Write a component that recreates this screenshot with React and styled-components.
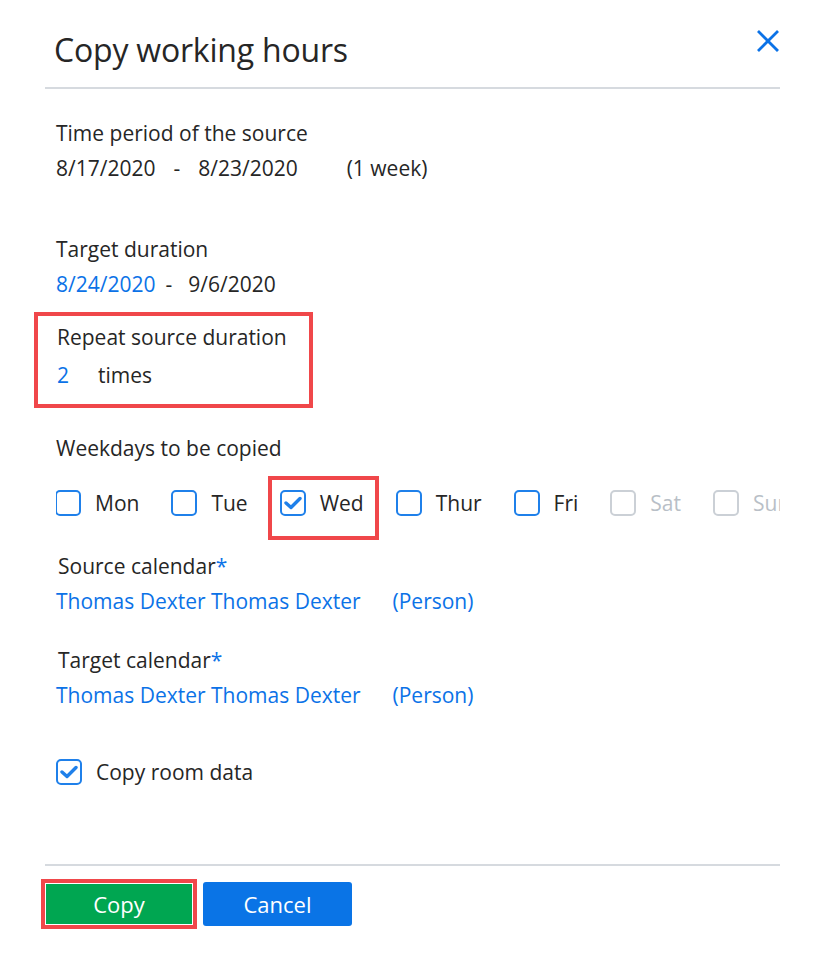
import styled, { createGlobalStyle } from "styled-components";

const GlobalStyle = createGlobalStyle`
    body {
        margin: 0;
        background: #ffffff;
        font-family: "Open Sans", "Noto Sans", sans-serif;
        color: #262626;
    }
`;

const Dialog = styled.div`
    width: 825px;
    height: 971px;
    box-sizing: border-box;
    padding: 0 45px;
    background: #ffffff;
    overflow: hidden;
`;

const Header = styled.div`
    height: 87px;
    display: flex;
    justify-content: space-between;
    align-items: flex-start;
    border-bottom: 2px solid #d6dadf;
`;

const Title = styled.h2`
    margin: 30px 0 0 9px;
    font-size: 32px;
    font-weight: 400;
    line-height: 40px;
    letter-spacing: -0.2px;
`;

const CloseButton = styled.button`
    margin: 29px 0 0 0;
    padding: 0;
    width: 24px;
    height: 24px;
    border: none;
    background: transparent;
    cursor: pointer;
`;

const Body = styled.div`
    display: flow-root;
    padding-left: 11px;
    height: 775px;
    border-bottom: 2px solid #d6dadf;
`;

const Section = styled.div`
    margin-top: ${(p) => p.$top || 0}px;
`;

const Label = styled.div`
    font-size: 21px;
    line-height: 35px;
    padding-left: ${(p) => p.$indent || 0}px;
`;

const Required = styled.span`
    color: #0b72e7;
`;

const ValueRow = styled.div`
    display: flex;
    align-items: center;
    font-size: 21px;
    line-height: 35px;
    margin-top: ${(p) => p.$top || 0}px;
`;

const Text = styled.span`
    margin-left: ${(p) => p.$gap || 0}px;
    color: ${(p) => (p.$link ? "#0b72e7" : "#262626")};
`;

const Highlight = styled.div`
    width: 279px;
    box-sizing: border-box;
    margin: 10px 0 0 -22px;
    padding: 4px 0 11px 19px;
    border: 4px solid #f0474a;
`;

/* the weekday row runs past the dialog edge and is cut off there */
const Clip = styled.div`
    width: 724px;
    overflow: hidden;
    padding: 14px 0 30px;
    margin-top: -14px;
`;

const WeekdayRow = styled.div`
    display: flex;
    align-items: center;
    gap: 32px;
    height: 37px;
    margin: 18px 0 0 -1px;
`;

const Option = styled.label`
    position: relative;
    display: flex;
    align-items: center;
    gap: 14px;
    flex-shrink: 0;
    font-size: 21px;
    color: ${(p) => (p.$disabled ? "#b9bfc7" : "#262626")};

    ${(p) =>
        p.$marked &&
        `
        &::after {
            content: "";
            position: absolute;
            left: -12px;
            right: -15px;
            top: -13px;
            bottom: -23px;
            border: 4px solid #f0474a;
            pointer-events: none;
        }
    `}
`;

const Box = styled.span`
    width: 26px;
    height: 26px;
    box-sizing: border-box;
    border: 2px solid ${(p) => (p.$disabled ? "#cbd0d6" : "#1f80ea")};
    border-radius: 5px;
    display: flex;
    align-items: center;
    justify-content: center;
    background: #ffffff;
`;

const Footer = styled.div`
    display: flex;
    align-items: center;
    gap: 6px;
    margin-top: 13px;
    margin-left: -4px;
`;

const Marked = styled.div`
    border: 4px solid #f0474a;
    padding: 1px;
`;

const Button = styled.button`
    width: ${(p) => p.$width}px;
    height: ${(p) => p.$height}px;
    border: none;
    border-radius: ${(p) => (p.$radius ? 3 : 0)}px;
    background: ${(p) => p.$bg};
    color: #ffffff;
    font-family: "Open Sans", "Noto Sans", sans-serif;
    font-size: 22px;
    cursor: pointer;
`;

function Check() {
    return (
        <svg width="18" height="14" viewBox="0 0 18 14" fill="none">
            <path d="M2 7 L7 11.5 L16 2.5" stroke="#1f80ea" strokeWidth="3.4" strokeLinecap="round" strokeLinejoin="round" />
        </svg>
    );
}

function Checkbox({ label, checked, disabled, marked }) {
    return (
        <Option $disabled={disabled} $marked={marked}>
            <Box $disabled={disabled}>{checked && <Check />}</Box>
            {label}
        </Option>
    );
}

const weekdays = [
    { label: "Mon" },
    { label: "Tue" },
    { label: "Wed", checked: true, marked: true },
    { label: "Thur" },
    { label: "Fri" },
    { label: "Sat", disabled: true },
    { label: "Sun", disabled: true },
];

export default function App() {
    return (
        <>
            <GlobalStyle />
            <Dialog>
                <Header>
                    <Title>Copy working hours</Title>
                    <CloseButton aria-label="Close">
                        <svg width="24" height="24" viewBox="0 0 24 24">
                            <path d="M2 2 L22 22 M22 2 L2 22" stroke="#0b72e7" strokeWidth="2.8" />
                        </svg>
                    </CloseButton>
                </Header>

                <Body>
                    <Section $top={27}>
                        <Label>Time period of the source</Label>
                        <ValueRow>
                            <Text>8/17/2020</Text>
                            <Text $gap={18}>-</Text>
                            <Text $gap={18}>8/23/2020</Text>
                            <Text $gap={49}>(1 week)</Text>
                        </ValueRow>
                    </Section>

                    <Section $top={46}>
                        <Label>Target duration</Label>
                        <ValueRow>
                            <Text $link>8/24/2020</Text>
                            <Text $gap={10}>-</Text>
                            <Text $gap={16}>9/6/2020</Text>
                        </ValueRow>
                    </Section>

                    <Highlight>
                        <Label>Repeat source duration</Label>
                        <ValueRow $top={3}>
                            <Text $link>2</Text>
                            <Text $gap={29}>times</Text>
                        </ValueRow>
                    </Highlight>

                    <Section $top={23}>
                        <Label>Weekdays to be copied</Label>
                        <Clip>
                            <WeekdayRow>
                                {weekdays.map((d) => (
                                    <Checkbox key={d.label} {...d} />
                                ))}
                            </WeekdayRow>
                        </Clip>
                    </Section>

                    <Section $top={-2}>
                        <Label $indent={2}>
                            Source calendar<Required>*</Required>
                        </Label>
                        <ValueRow>
                            <Text $link>Thomas Dexter Thomas Dexter</Text>
                            <Text $link $gap={32}>(Person)</Text>
                        </ValueRow>
                    </Section>

                    <Section $top={24}>
                        <Label $indent={2}>
                            Target calendar<Required>*</Required>
                        </Label>
                        <ValueRow>
                            <Text $link>Thomas Dexter Thomas Dexter</Text>
                            <Text $link $gap={32}>(Person)</Text>
                        </ValueRow>
                    </Section>

                    <Section $top={45}>
                        <Checkbox label="Copy room data" checked />
                    </Section>
                </Body>

                <Footer>
                    <Marked>
                        <Button $width={146} $height={40} $bg="#00a651">Copy</Button>
                    </Marked>
                    <Button $width={149} $height={44} $bg="#0a74e6" $radius>Cancel</Button>
                </Footer>
            </Dialog>
        </>
    );
}
